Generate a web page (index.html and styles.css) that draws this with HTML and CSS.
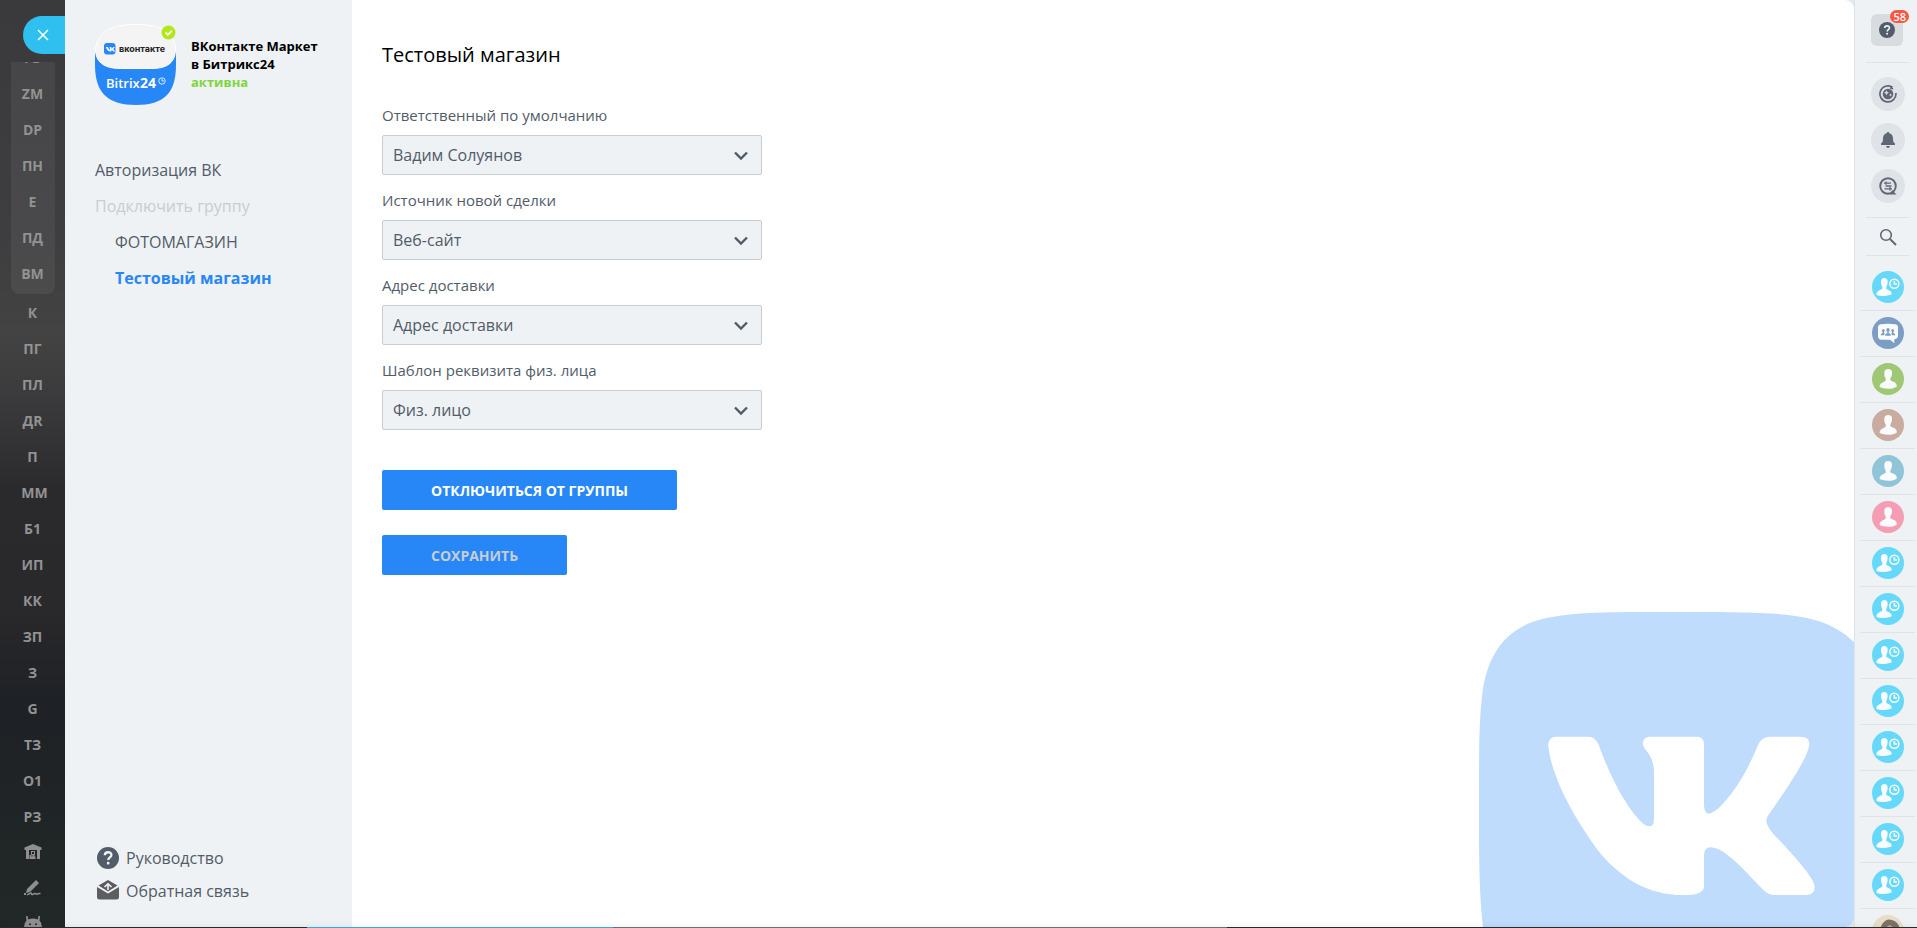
FILE: index.html
```
<!DOCTYPE html>
<html lang="ru">
<head>
<meta charset="utf-8">
<title>ВКонтакте Маркет в Битрикс24</title>
<link rel="stylesheet" href="styles.css">
</head>
<body>
<svg class="defs" aria-hidden="true">
  <symbol id="person" viewBox="0 0 96 96">
    <path fill="#fafbfd" d="M37 29c0-7 5-11 11-11s12 3 12 10c0 7-1 14-5 18v6c7 4 19 6 19 15v4c-8 5-18 6-26 6s-18-1-25-5c-1-12 11-14 18-19v-7c-4-4-4-11-4-17z"/>
  </symbol>
  <symbol id="guest" viewBox="0 0 96 96">
    <path fill="#fafbfd" d="M27 32c0-7 3-11 10-11 6 0 10 4 10 10s-1 12-4 16v7c6 4 16 5 16 14v2c-7 4-15 5-23 5s-17-1-23-4c0-12 11-13 18-18v-6c-3-4-4-10-4-15z"/>
    <circle cx="67" cy="38" r="13.500" fill="none" stroke="#fafbfd" stroke-width="4.500"/>
    <path d="M67 30v9h8" fill="none" stroke="#fafbfd" stroke-width="4.500"/>
  </symbol>
  <symbol id="group" viewBox="0 0 96 96">
    <path fill="#fafbfd" d="M27 22Q48 19 69 22Q78 23 78 31V56Q78 64 70 66L67 67V79L54 68H27Q18 66 18 57V31Q18 23 27 22z"/>
    <g fill="#7c9ec4"><ellipse cx="48" cy="39" rx="5" ry="6"/><path d="M39 56q0-6 7-8v-6h4v6q7 2 7 8z"/><ellipse cx="34" cy="41" rx="4" ry="5"/><path d="M26 55q0-6 6-7v-5h4v5l3 2q-3 2-3 5z"/><ellipse cx="62" cy="41" rx="4" ry="5"/><path d="M70 55q0-6-6-7v-5h-4v5l-3 2q3 2 3 5z"/></g>
  </symbol>
  <symbol id="chevron" viewBox="0 0 16 12"><path d="M2 2.500l6 6 6-6" fill="none" stroke="#525c69" stroke-width="2.400"/></symbol>
  <symbol id="question" viewBox="0 0 22 22">
    <circle cx="11" cy="11" r="11" fill="#535c69"/>
    <path d="M7.800 8.300c.2-4 6.700-4 6.600-.3 0 2.300-3.200 2.600-3.200 5" fill="none" stroke="#eef2f4" stroke-width="2.300"/>
    <rect x="9.900" y="14.800" width="2.600" height="2.600" rx="1" fill="#eef2f4"/>
  </symbol>
</svg>
<div class="app">
  <nav class="rail" aria-label="Меню">
    <div class="rail-head"><button class="close" aria-label="Закрыть"><svg viewBox="0 0 12 12"><path d="M1 1l10 10M11 1L1 11" stroke="#fff" stroke-width="1.500"/></svg></button></div>
    <div class="rail-group">
      <a>ГЗ</a><a>ZM</a><a>DP</a><a>ПН</a><a>Е</a><a>ПД</a><a>ВМ</a>
    </div>
    <div class="rail-list">
      <a>К</a><a>ПГ</a><a>ПЛ</a><a>ДR</a><a>П</a><a class="wide">ММ</a><a>Б1</a><a>ИП</a><a>КК</a><a>ЗП</a><a>З</a><a>G</a><a>ТЗ</a><a>О1</a><a>РЗ</a>
      <a aria-label="Склад"><svg viewBox="0 0 18 16"><path fill="#8f8f91" fill-rule="evenodd" d="M9 0l8.500 3.500V6H16v9h-3V6H5v9H2V6H.5V3.500zM5.500 11h2v1.500h1V11H7V7h4v4h-.5v1.500h1V15h-6z"/><rect x="8" y="8" width="2" height="2" fill="#222"/></svg></a>
      <a aria-label="Подпись"><svg viewBox="0 0 18 16"><path fill="#8f8f91" d="M12 0l3 3-9 9-4 1 1-4zM0 13h2v2H0z"/><path d="M3 14.500c2 .5 3-2 4-1.500s0 2 1.500 1.500 2-1.500 3-1 1 1 2 .5 1.500-.8 3-.5" fill="none" stroke="#8f8f91" stroke-width="1.500"/></svg></a>
      <a aria-label="Приложение"><svg viewBox="0 0 18 16"><path fill="#8f8f91" fill-rule="evenodd" d="M2 0h1.500l.8 3.500q4.700-2 9.400 0L14.500 0H16l-.5 4.500Q18 7 18 11v4H0v-4q0-4 2.500-6.500zM5 7.500V9h2V7.500zm6 0V9h2V7.500z"/></svg></a>
    </div>
  </nav>

  <aside class="sidebar">
    <header class="brand">
      <svg class="brand-logo" viewBox="0 0 81 81">
        <path fill="#2887f6" d="M0 26h81v15c0 28-12 40-40 40S0 69 0 41z"/>
        <path fill="#eef2f4" d="M0 0h81v28H0z"/>
        <path fill="#f4f4f4" stroke="#fff" d="M41 .5c27 0 37 8 39.500 23 .5 15-8 21-24 21h-31C9 44.500 0 38 .5 24 4 8 14 .5 41 .5z"/>
        <rect x="9" y="19" width="11.500" height="11.500" rx="3" fill="#2887f6"/>
        <path d="M11 23h2q.5 2.500 1.800 3.200V23h1.600v1.700q1.300-.4 1.800-1.700h1.500q-.4 1.600-1.700 2.300 1.400.6 2 2.200h-1.700q-.6-1.300-1.900-1.500v1.500Q12 27.600 11 23z" fill="#fff"/>
        <text class="logo-vk" x="24" y="28">вконтакте</text>
        <text class="logo-bx" x="11" y="64">Bitrix</text>
        <text class="logo-24" x="45" y="64">24</text>
        <circle cx="67" cy="57" r="3.200" fill="none" stroke="#fff" stroke-width=".8"/><path d="M67 55v2h2" fill="none" stroke="#fff" stroke-width=".8"/>
        <circle cx="73.500" cy="8.500" r="7" fill="#b5e61d"/><path d="M70.500 8.500l2.300 2.300 4-4" fill="none" stroke="#fff" stroke-width="1.700"/>
      </svg>
      <div class="brand-text">ВКонтакте Маркет<br>в Битрикс24<br><span class="status">активна</span></div>
    </header>
    <nav class="menu">
      <a href="#">Авторизация ВК</a>
      <a class="disabled">Подключить группу</a>
      <a class="sub" href="#">ФОТОМАГАЗИН</a>
      <a class="sub active" href="#">Тестовый магазин</a>
    </nav>
    <footer class="help">
      <a href="#"><svg class="help-icon"><use href="#question"/></svg>Руководство</a>
      <a href="#"><svg class="help-icon" viewBox="0 0 22 22"><path fill="#5c5d5f" d="M11 0l9.500 5.500L11 11.500 1.500 5.500z"/><path fill="#5c5d5f" d="M0 7l11 6.500L22 7v10q0 2.500-2.500 2.500h-17Q0 19.500 0 17z"/><path d="M11 10V4M7.500 7L11 3.800 14.500 7" fill="none" stroke="#eef2f4" stroke-width="1.600"/></svg>Обратная связь</a>
    </footer>
  </aside>

  <div class="main-wrap">
  <main class="main">
    <h1>Тестовый магазин</h1>
    <form>
      <div class="field"><label for="owner">Ответственный по умолчанию</label><div class="select"><select id="owner"><option>Вадим Солуянов</option></select><svg><use href="#chevron"/></svg></div></div>
      <div class="field"><label for="source">Источник новой сделки</label><div class="select"><select id="source"><option>Веб-сайт</option></select><svg><use href="#chevron"/></svg></div></div>
      <div class="field"><label for="address">Адрес доставки</label><div class="select"><select id="address"><option>Адрес доставки</option></select><svg><use href="#chevron"/></svg></div></div>
      <div class="field"><label for="template">Шаблон реквизита физ. лица</label><div class="select"><select id="template"><option>Физ. лицо</option></select><svg><use href="#chevron"/></svg></div></div>
      <div class="actions">
        <button type="button">ОТКЛЮЧИТЬСЯ ОТ ГРУППЫ</button>
        <button type="submit" disabled>СОХРАНИТЬ</button>
      </div>
    </form>
    <svg class="vk" viewBox="57 66 1125 945" aria-hidden="true">
      <path fill="#bfdcfc" d="M620 66C850 66 960 66 1040 84C1100 97 1150 122 1185 160V1011H69C57 900 57 800 57 640C57 480 57 400 66 320C80 190 140 108 260 84C350 66 440 66 620 66z"/>
      <path fill="#fff" d="M290 440H385Q406 440 416 464C460 585 505 655 540 692Q558 710 570 709Q582 708 582 684V545Q581 510 563 487Q548 470 548 459Q550 441 569 440H710Q732 440 732 463V645Q733 671 746 671Q758 670 776 654C825 608 865 536 894 466Q903 440 932 440H1022Q1053 440 1047 468C1040 505 1000 568 926 674Q914 690 922 704C935 732 955 745 985 780C1025 824 1048 852 1062 880Q1070 912 1040 915H940Q924 915 905 895C870 860 850 835 815 805C790 783 770 772 750 772Q732 773 732 798V888Q732 914 685 915C570 920 490 868 425 795C345 690 278 570 265 470Q263 440 290 440z"/>
    </svg>
  </main>
  </div>

  <aside class="dock" aria-label="Чаты">
    <div class="dock-help"><button class="square" aria-label="Помощь"><svg><use href="#question"/></svg><span class="badge">58</span></button></div>
    <div class="dock-tools">
      <button aria-label="Ассистент"><svg viewBox="0 0 18 18"><path d="M13.500 2.300A8 8 0 1 0 16.900 8M14 4A6.300 6.300 0 0 0 11 3" fill="none" stroke="#606774" stroke-width="1.700"/><circle cx="9" cy="9" r="5.300" fill="#606774"/><path d="M7.500 5.200l.8 1.700 1.700.8-1.700.8-.8 1.700-.8-1.700L5 7.700l1.700-.8zM11.500 8.500l.5 1 1 .5-1 .5-.5 1-.5-1-1-.5 1-.5z" fill="#e0e4e9"/></svg></button>
      <button aria-label="Уведомления"><svg viewBox="0 0 18 18"><path fill="#606774" d="M9 1q1.300 0 1.400 1.200C13 3 14 5 14 7.500c0 3 .5 4 2 5V14H2v-1.500c1.500-1 2-2 2-5C4 5 5 3 7.600 2.200 7.700 1 9 1 9 1zM7 15h4q-.3 2-2 2t-2-2z"/></svg></button>
      <button aria-label="Чат"><svg viewBox="0 0 18 18"><circle cx="9" cy="9" r="7.800" fill="none" stroke="#606774" stroke-width="1.900"/><path d="M13 13l4.500 4.500h-6z" fill="#606774"/><path d="M5 6.200h7M6.500 9h6M5.500 11.800H13M7 4.500v3.200M11 10v3.600" stroke="#606774" stroke-width="1.300"/></svg></button>
    </div>
    <div class="dock-search"><button aria-label="Поиск"><svg viewBox="0 0 18 18"><circle cx="7" cy="7" r="5.300" fill="none" stroke="#606774" stroke-width="1.600"/><path d="M11 11l6 6" stroke="#606774" stroke-width="2"/></svg></button></div>
    <ul class="avatars">
      <li><svg class="cyan"><use href="#guest"/></svg></li>
      <li><svg class="blue"><use href="#group"/></svg></li>
      <li><svg class="green"><use href="#person"/></svg></li>
      <li><svg class="brown"><use href="#person"/></svg></li>
      <li><svg class="teal"><use href="#person"/></svg></li>
      <li><svg class="pink"><use href="#person"/></svg></li>
      <li><svg class="cyan"><use href="#guest"/></svg></li>
      <li><svg class="cyan"><use href="#guest"/></svg></li>
      <li><svg class="cyan"><use href="#guest"/></svg></li>
      <li><svg class="cyan"><use href="#guest"/></svg></li>
      <li><svg class="cyan"><use href="#guest"/></svg></li>
      <li><svg class="cyan"><use href="#guest"/></svg></li>
      <li><svg class="cyan"><use href="#guest"/></svg></li>
      <li><svg class="cyan"><use href="#guest"/></svg></li>
      <li><svg class="photo" viewBox="0 0 32 32"><path d="M8 14Q12 2 20 5q7 2 8 10l-4 6-5-10-9 8z" fill="#7d7268"/><path d="M12 20q1-9 6-10 5 2 5 11z" fill="#c9a48c"/></svg></li>
    </ul>
  </aside>
</div>
<div class="taskbar"></div>
</body>
</html>
```
FILE: styles.css
```
* { box-sizing: border-box; }
html { height: 100%; overflow: hidden; }
body {
  margin: 0;
  height: 100%;
  display: grid;
  grid-template-rows: minmax(0, 1fr) 1px;
  overflow: hidden;
  font-family: "Open Sans", "Noto Sans", sans-serif;
  font-size: 16px;
  color: #525c69;
  background: #eef2f4;
}
button { font: inherit; border: 0; padding: 0; background: none; }
a { color: inherit; text-decoration: none; }
svg { display: block; }
.defs { position: absolute; width: 0; height: 0; }
.app { min-height: 0; display: grid; grid-template-columns: 65px 287px 1fr 63px; grid-template-rows: minmax(0, 1fr); }

.rail {
  min-height: 0;
  overflow: hidden;
  background: linear-gradient(#3a393c 0, #3e3d3f 25%, #434343 36%, #39393b 44%, #2a292c 53%, #29282b 66%, #1e2125 76%, #222827 100%);
  color: #929293;
  font-size: 14px;
  font-weight: 700;
}
.rail-head { height: 62px; padding-top: 16px; display: flex; justify-content: flex-end; align-items: flex-start; }
.close { width: 42px; height: 38px; border-radius: 19px 0 0 19px; background: #2fc0ef; display: grid; place-items: center; padding-right: 2px; }
.close svg { width: 12px; height: 12px; }
.rail-group { margin: 0 10px 0 11px; height: 232px; overflow: hidden; display: flex; flex-direction: column; justify-content: flex-end; padding: 0 1px 3px 0; border-radius: 0 0 8px 8px; background: rgba(255, 255, 255, .06); }
.rail-list { padding: 0 11px; }
.rail a { flex: none; height: 36px; display: flex; align-items: center; justify-content: center; }
.rail a.wide { padding-left: 4px; }
.rail a svg { width: 18px; height: 16px; }

.sidebar { min-height: 0; padding: 24px 30px 20px; display: flex; flex-direction: column; background: #eef2f4; }
.brand { display: flex; gap: 15px; }
.brand-logo { flex: none; width: 81px; height: 81px; }
.logo-vk { font: 700 9px "Inter", "Open Sans", sans-serif; fill: #222; }
.logo-bx { font: 600 13px "Open Sans", sans-serif; fill: #fff; }
.logo-24 { font: 700 14px "Open Sans", sans-serif; fill: #fff; }
.brand-text { padding-top: 13px; color: #000; font-size: 13px; font-weight: 700; line-height: 18px; white-space: nowrap; }
.status { color: #7fd63c; }
.menu { padding-top: 47px; display: flex; flex-direction: column; }
.menu a { height: 36px; line-height: 36px; }
.menu .disabled { color: #c6cdd3; }
.menu .sub { padding-left: 20px; }
.menu .active { color: #2887f6; font-weight: 700; }
.help { margin-top: auto; }
.help a { display: flex; align-items: center; gap: 7px; height: 33px; padding-left: 2px; }
.help-icon { width: 22px; height: 22px; }

.main-wrap { min-width: 0; min-height: 0; background: #e4e9ed; }
.main { position: relative; height: 100%; padding: 40px 30px; overflow: hidden; background: #fff; border-radius: 0 9px 9px 0; }
h1 { margin: 0 0 30px; color: #000; font-size: 20px; font-weight: 400; line-height: 30px; }
.field { width: 380px; height: 85px; padding-top: 5px; }
.field label { display: block; height: 30px; font-size: 15px; line-height: 20px; }
.select { position: relative; height: 40px; }
.select select { width: 100%; height: 40px; padding: 0 30px 0 10px; appearance: none; border: 1px solid #c6cdd3; border-radius: 2px; background: #eef2f4; color: #525c69; font: inherit; }
.select svg { position: absolute; right: 13px; top: 15px; width: 16px; height: 12px; pointer-events: none; }
.actions { padding-top: 30px; display: flex; flex-direction: column; align-items: flex-start; gap: 25px; }
.actions button { height: 40px; padding: 0 49px; border-radius: 2px; background: #2887f6; color: #fff; font-size: 14px; font-weight: 700; }
.actions button:disabled { color: #c6cdd3; }
.vk { position: absolute; right: 0; bottom: 0; width: 375px; height: 315px; }

.dock { min-height: 0; overflow: hidden; border-left: 1px solid #dde3e9; background: #eef2f4; }
.dock-help, .dock-tools, .dock-search { margin: 0 8px 0 11px; padding-right: 1px; border-bottom: 1px solid #dfe3e7; display: flex; flex-direction: column; align-items: center; }
.dock-help { height: 63px; padding-top: 14px; }
.square { position: relative; width: 32px; height: 32px; border-radius: 6px; background: #d9dcdf; display: grid; place-items: center; }
.square svg { width: 16px; height: 16px; }
.badge { position: absolute; top: -4px; right: -6px; height: 13px; padding: 0 3px; border-radius: 7px; background: #fb5543; color: #fff; font-size: 11px; font-weight: 600; line-height: 13px; }
.dock-tools { height: 155px; padding: 14px 0 0 1px; gap: 12px; }
.dock-tools button { width: 34px; height: 34px; border-radius: 50%; background: #dfe3e8; display: grid; place-items: center; }
.dock-tools svg, .dock-search svg { width: 18px; height: 18px; }
.dock-search { height: 38px; padding: 10px 0 0 1px; }
.avatars { list-style: none; margin: 0 2px 0 5px; padding: 9px 0 0; }
.avatars li { height: 46px; padding-top: 6px; border-bottom: 1px solid #dfe3e7; display: flex; justify-content: center; }
.avatars svg { width: 32px; height: 32px; border-radius: 50%; }
.cyan { background: #66d9fa; }
.blue { background: #7c9ec4; }
.green { background: #9fc874; }
.brown { background: #c9aba0; }
.teal { background: #90c5d9; }
.pink { background: #f59db4; }
.photo { background: #e9dcc8; }

.taskbar {
  position: relative;
  background: linear-gradient(90deg, #2a2a2c 16%, #3fa4cf 16%, #3fa4cf 32%, #6d6e70 32%, #6d6e70 64%, #2a2a2c 64%);
  box-shadow: 0 -1px 5px rgba(0, 0, 0, .18);
}
```
